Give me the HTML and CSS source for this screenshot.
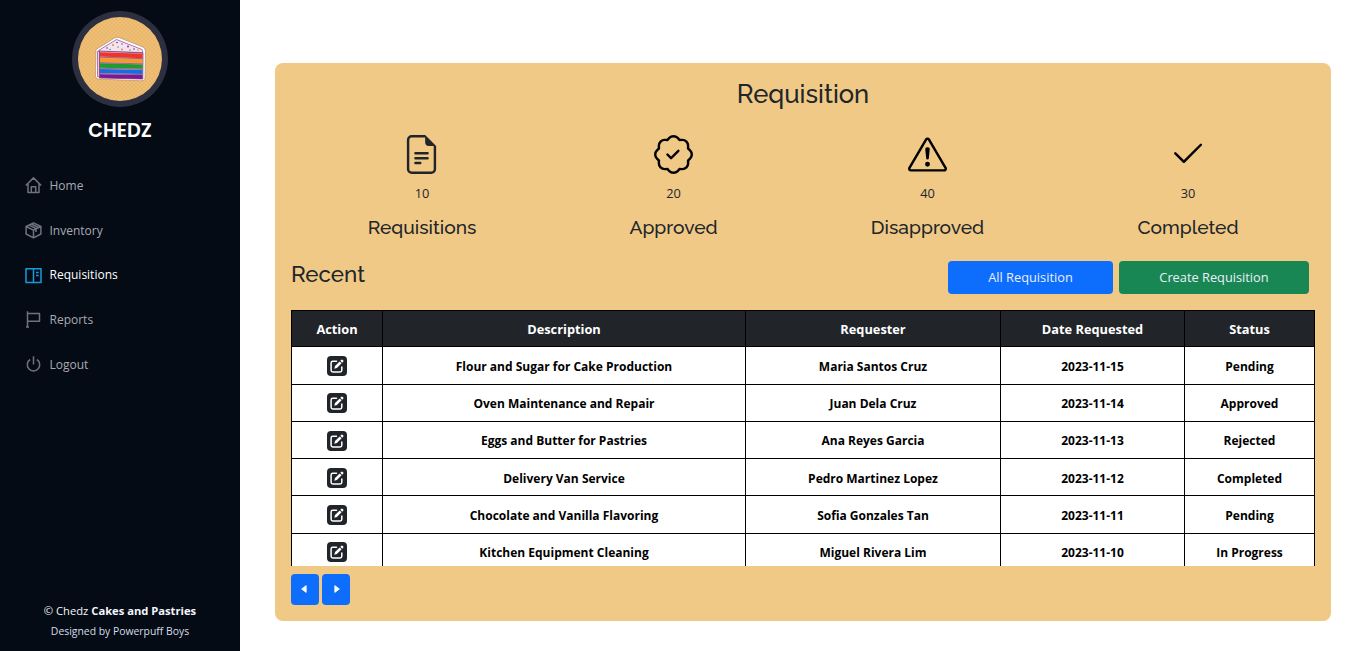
FILE: index.html
```
<!DOCTYPE html>
<html lang="en">
<head>
<meta charset="utf-8">
<title>Requisition</title>
<link rel="stylesheet" href="styles.css">
</head>
<body>
<svg class="defs" aria-hidden="true">
  <symbol id="edit" viewBox="0 0 14 14"><path d="M6.500 2.200H2.800Q1.100 2.200 1.100 3.900V11.200Q1.100 12.900 2.800 12.900H10.100Q11.800 12.900 11.800 11.200V8" fill="none" stroke="#fff" stroke-width="1.500" stroke-linecap="round"/><path d="M4.300 9.700L5 7.100 9.700 2.400 11.600 4.300 6.900 9z"/><path d="M10.300 1.800L11.400 .7Q11.900 .3 12.400 .7L13.300 1.600Q13.700 2.100 13.300 2.600L12.200 3.700z"/></symbol>
</svg>
<div class="app">
  <aside class="sidebar">
    <div class="brand">
      <svg class="logo" viewBox="0 0 96 96">
        <defs><pattern id="weave" width="4" height="4" patternUnits="userSpaceOnUse"><rect width="4" height="4" fill="#eebf75"/><path d="M0 0l4 4M4 0L0 4" stroke="#e5b36a" stroke-width=".7"/></pattern></defs>
        <circle cx="48" cy="48" r="48" fill="#2c2f3f"/>
        <circle cx="48" cy="48" r="42" fill="url(#weave)"/>
        <path d="M24 38.500L42.500 27Q45 25.800 47 26.500L71 36Q73.500 37.500 73.500 40L73 67.500Q72.500 70 69 69.800L26 68Q23.500 67.500 23.500 65Z" fill="#fff" stroke="#b98b68" stroke-width=".7"/>
        <path d="M26.500 39.500L44.500 28.500 70 38.500 71 41.500 28 40.500Z" fill="#f5e3f3" stroke="#6d2b66" stroke-width=".6"/>
        <path d="M25.500 40.500h2.500v26l-2.500-1z" fill="#e8c6dc" stroke="#7c3971" stroke-width=".6"/>
        <path d="M27.500 40L71 42 70.800 68 27.500 67Z" fill="#e7b5d0" stroke="#6d2b66" stroke-width=".7"/>
        <path d="M28 41.200l42.500 1.500v4.500L28 45.500z" fill="#f0332b"/>
        <path d="M28 47l42.500 1.300v4L28 51z" fill="#f59a25"/>
        <path d="M28 52.300l42.500 1.200v4.200L28 56.700z" fill="#1f9c30"/>
        <path d="M28 58l42.500 1v4L28 62z" fill="#1470df"/>
        <path d="M28 63.200l42.500 .9v4L28 66.800z" fill="#7c1799"/>
        <path d="M28 46.200l42.500 1.500M28 51.700l42.500 1.200M28 57.300l42.500 1M28 62.600l42.500 1" stroke="#6d2b66" stroke-width=".6"/>
        <g fill="#7a2f6c"><circle cx="45" cy="31.500" r=".8"/><circle cx="35" cy="37" r=".8"/><circle cx="56" cy="35.500" r=".9"/><circle cx="50" cy="33" r=".7"/><circle cx="62" cy="38" r=".8"/></g>
        <g fill="#d78a25"><circle cx="41" cy="34" r=".9"/><circle cx="50" cy="38.500" r=".9"/><circle cx="66" cy="39" r=".8"/></g>
        <g fill="#43a084"><circle cx="46" cy="36" r=".8"/><circle cx="38" cy="38.500" r=".8"/><circle cx="58" cy="39" r=".8"/></g>
      </svg>
      <div class="brand-name">CHEDZ</div>
    </div>
    <nav class="menu">
      <a class="menu-item"><svg class="menu-icon" viewBox="0 0 17 17"><path d="M.8 8.500L8.500 .9 16.200 8.500M3 6.800v8.700h11V6.800M6.300 15.500V9.800h4.400v5.700"/></svg>Home</a>
      <a class="menu-item"><svg class="menu-icon" viewBox="0 0 17 17"><path d="M8.500 .9L15.900 4.500V12L8.500 15.800 1.100 12V4.500ZM1.100 4.500L8.500 8.200 15.900 4.500M8.500 8.200v7.600M4 3.200L11 6.700V10M6.300 2L13.300 5.500"/></svg>Inventory</a>
      <a class="menu-item active"><svg class="menu-icon" viewBox="0 0 17 17"><path d="M1 1.800h15v13.700H1ZM8.500 1.800v13.700M11 5.500h2.700M11 8.500h2.700"/></svg>Requisitions</a>
      <a class="menu-item"><svg class="menu-icon" viewBox="0 0 17 17"><path d="M2.500 .3v16M1 16h3M2.500 2.500h12v7.700h-12"/></svg>Reports</a>
      <a class="menu-item"><svg class="menu-icon" viewBox="0 0 17 17"><path d="M8.500 .3v8.200M5.200 3.500A6.200 6.200 0 1 0 11.800 3.500"/></svg>Logout</a>
    </nav>
    <footer class="credits">
      <div class="copyright">© Chedz <b>Cakes and Pastries</b></div>
      <div class="designer">Designed by Powerpuff Boys</div>
    </footer>
  </aside>
  <main class="content">
    <section class="card">
      <h1 class="title">Requisition</h1>
      <div class="stats">
        <div class="stat stat-total">
          <svg class="stat-icon soft" viewBox="0 0 16 16"><path d="M5.500 7a.5.5 0 0 0 0 1h5a.5.5 0 0 0 0-1h-5zM5 9.500a.5.5 0 0 1 .5-.5h5a.5.5 0 0 1 0 1h-5a.5.5 0 0 1-.5-.5zm0 2a.5.5 0 0 1 .5-.5h2a.5.5 0 0 1 0 1h-2a.5.5 0 0 1-.5-.5z"/><path d="M9.500 0H4a2 2 0 0 0-2 2v12a2 2 0 0 0 2 2h8a2 2 0 0 0 2-2V4.500L9.500 0zm0 1v2A1.500 1.500 0 0 0 11 4.500h2V14a1 1 0 0 1-1 1H4a1 1 0 0 1-1-1V2a1 1 0 0 1 1-1h5.500z"/></svg>
          <div class="count">10</div><div class="label">Requisitions</div>
        </div>
        <div class="stat stat-approved">
          <svg class="stat-icon" viewBox="0 0 16 16"><path d="M10.354 6.146a.5.5 0 0 1 0 .708l-3 3a.5.5 0 0 1-.708 0l-1.500-1.500a.5.5 0 1 1 .708-.708L7 8.793l2.646-2.647a.5.5 0 0 1 .708 0z"/><path d="m10.273 2.513-.921-.944.715-.698.622.637.89-.011a2.890 2.890 0 0 1 2.924 2.924l-.01.89.636.622a2.890 2.890 0 0 1 0 4.134l-.637.622.011.89a2.890 2.890 0 0 1-2.924 2.924l-.89-.01-.622.636a2.890 2.890 0 0 1-4.134 0l-.622-.637-.89.011a2.890 2.890 0 0 1-2.924-2.924l.01-.89-.636-.622a2.890 2.890 0 0 1 0-4.134l.637-.622-.011-.89a2.890 2.890 0 0 1 2.924-2.924l.89.01.622-.636a2.890 2.890 0 0 1 4.134 0l-.715.698a1.890 1.890 0 0 0-2.704 0l-.92.944-1.320-.016a1.890 1.890 0 0 0-1.911 1.912l.016 1.318-.944.921a1.890 1.890 0 0 0 0 2.704l.944.92-.016 1.320a1.890 1.890 0 0 0 1.912 1.911l1.318-.016.921.944a1.890 1.890 0 0 0 2.704 0l.92-.944 1.320.016a1.890 1.890 0 0 0 1.911-1.912l-.016-1.318.944-.921a1.890 1.890 0 0 0 0-2.704l-.944-.92.016-1.320a1.890 1.890 0 0 0-1.912-1.911l-1.318.016z"/></svg>
          <div class="count">20</div><div class="label">Approved</div>
        </div>
        <div class="stat stat-disapproved">
          <svg class="stat-icon" viewBox="0 0 16 16"><path d="M7.938 2.016A.13.13 0 0 1 8.002 2a.13.13 0 0 1 .063.016.146.146 0 0 1 .054.057l6.857 11.667c.036.06.035.124.002.183a.163.163 0 0 1-.054.06.116.116 0 0 1-.066.017H1.146a.115.115 0 0 1-.066-.017.163.163 0 0 1-.054-.06.176.176 0 0 1 .002-.183L7.884 2.073a.147.147 0 0 1 .054-.057zm1.044-.45a1.130 1.130 0 0 0-1.960 0L.165 13.233c-.457.778.091 1.767.98 1.767h13.713c.889 0 1.438-.99.98-1.767L8.982 1.566z"/><path d="M7.002 12a1 1 0 1 1 2 0 1 1 0 0 1-2 0zM7.100 5.995a.905.905 0 1 1 1.800 0l-.35 3.507a.552.552 0 0 1-1.100 0L7.100 5.995z"/></svg>
          <div class="count">40</div><div class="label">Disapproved</div>
        </div>
        <div class="stat stat-completed">
          <svg class="stat-icon" viewBox="0 0 16 16"><path d="M13.854 3.646a.5.5 0 0 1 0 .708l-7 7a.5.5 0 0 1-.708 0l-3.500-3.500a.5.5 0 1 1 .708-.708L6.500 10.293l6.646-6.647a.5.5 0 0 1 .708 0z"/></svg>
          <div class="count">30</div><div class="label">Completed</div>
        </div>
      </div>
      <div class="toolbar">
        <h2 class="subtitle">Recent</h2>
        <div class="actions"><button class="btn all">All Requisition</button><button class="btn create">Create Requisition</button></div>
      </div>
      <div class="table-wrap">
        <table class="table">
          <colgroup><col class="c-action"><col class="c-desc"><col class="c-req"><col class="c-date"><col class="c-status"></colgroup>
          <thead><tr><th>Action</th><th>Description</th><th>Requester</th><th>Date Requested</th><th>Status</th></tr></thead>
          <tbody>
            <tr><td><span class="edit"><svg><use href="#edit"/></svg></span></td><td>Flour and Sugar for Cake Production</td><td>Maria Santos Cruz</td><td>2023-11-15</td><td>Pending</td></tr>
            <tr><td><span class="edit"><svg><use href="#edit"/></svg></span></td><td>Oven Maintenance and Repair</td><td>Juan Dela Cruz</td><td>2023-11-14</td><td>Approved</td></tr>
            <tr><td><span class="edit"><svg><use href="#edit"/></svg></span></td><td>Eggs and Butter for Pastries</td><td>Ana Reyes Garcia</td><td>2023-11-13</td><td>Rejected</td></tr>
            <tr><td><span class="edit"><svg><use href="#edit"/></svg></span></td><td>Delivery Van Service</td><td>Pedro Martinez Lopez</td><td>2023-11-12</td><td>Completed</td></tr>
            <tr><td><span class="edit"><svg><use href="#edit"/></svg></span></td><td>Chocolate and Vanilla Flavoring</td><td>Sofia Gonzales Tan</td><td>2023-11-11</td><td>Pending</td></tr>
            <tr><td><span class="edit"><svg><use href="#edit"/></svg></span></td><td>Kitchen Equipment Cleaning</td><td>Miguel Rivera Lim</td><td>2023-11-10</td><td>In Progress</td></tr>
          </tbody>
        </table>
      </div>
      <div class="pager">
        <button class="page-btn prev"><svg viewBox="0 0 6 8"><path d="M5.200 .6v6.800L.6 4z"/></svg></button>
        <button class="page-btn next"><svg viewBox="0 0 6 8"><path d="M.8 .6v6.800L5.400 4z"/></svg></button>
      </div>
    </section>
  </main>
</div>
</body>
</html>
```
FILE: styles.css
```
* { box-sizing: border-box; }
body { margin: 0; background: #fff; font: 13px/19.5px "Open Sans", sans-serif; color: #212529; overflow: hidden; }
.defs { display: none; }
.app { display: flex; height: 651px; }
.sidebar { width: 240px; flex: none; background: #040b14; display: flex; flex-direction: column; padding-top: 11px; }
.brand { display: flex; flex-direction: column; align-items: center; }
.logo { width: 96px; height: 96px; }
.brand-name { margin-top: 9px; font: 600 19.200px/30px Poppins, "Open Sans", sans-serif; color: #fff; }
.menu { display: flex; flex-direction: column; padding: 17.300px 0 0 25px; }
.menu-item { display: flex; align-items: center; gap: 7.500px; height: 44.700px; font-size: 12px; color: #a8a9b4; }
.menu-icon { width: 17px; height: 17px; fill: none; stroke: #6f7180; stroke-width: 1.500; stroke-linejoin: round; }
.menu-item.active { color: #fff; }
.active .menu-icon { stroke: #149ddd; }
.credits { margin-top: auto; padding-bottom: 10px; text-align: center; color: #f4f6fd; }
.copyright { font-size: 11.200px; line-height: 20px; }
.designer { font-size: 10.400px; line-height: 20px; color: #d5dce8; }
.content { flex: 1; padding: 63px 35px 30px; }
.card { height: 558px; padding: 16px; border-radius: 8px; background: #f0c987; display: flex; flex-direction: column; }
.title, .subtitle, .label { font-family: Raleway, Lato, sans-serif; font-weight: 500; }
.title { margin: 0; font-size: 25.600px; line-height: 31px; text-align: center; }
.stats { display: flex; justify-content: space-around; margin-top: 25px; }
.stat { display: flex; flex-direction: column; align-items: center; white-space: nowrap; }
.stat-total { width: 109px; }
.stat-approved { width: 88px; }
.stat-disapproved { width: 114px; }
.stat-completed { width: 101px; }
.stat-icon { width: 39px; height: 39px; fill: #000; }
.stat-icon.soft { fill: #212529; }
.stat-total .stat-icon, .stat-completed .stat-icon { margin-right: 1px; }
.count { margin-top: 10px; font-size: 12.800px; }
.label { margin-top: 12px; font-size: 19.200px; line-height: 23px; }
.toolbar { display: flex; justify-content: space-between; margin-top: 22px; padding-right: 6px; height: 49px; }
.subtitle { margin: 0; font-size: 22.400px; line-height: 27px; }
.actions { display: flex; gap: 6px; }
.btn { height: 33px; border: 0; border-radius: 4px; padding: 0; color: #e9f0fb; font: 12.800px "Open Sans", sans-serif; }
.all { width: 165px; background: #0d6efd; }
.create { width: 190px; background: #198754; }
.table-wrap { height: 256px; overflow: hidden; }
.table { width: 1024px; table-layout: fixed; border-collapse: collapse; background: #fff; color: #000; font-size: 12px; font-weight: 700; text-align: center; }
.c-action { width: 91px; }
.c-desc { width: 363px; }
.c-req { width: 255px; }
.c-date { width: 184px; }
.c-status { width: 130px; }
.table th, .table td { padding: 2px 0 0; border: 1px solid #000; vertical-align: middle; }
.table th { height: 36.950px; background: #212529; color: #fff; font-size: 12.800px; }
.table td { height: 37.250px; padding-top: 2.300px; }
.table td:first-child { padding-top: 1px; }
.edit { display: flex; align-items: center; justify-content: center; width: 20px; height: 20px; margin: 0 auto; border-radius: 4px; background: #212529; }
.edit svg { width: 14px; height: 14px; fill: #fff; }
.pager { display: flex; gap: 3px; margin-top: 8px; }
.page-btn { width: 28px; height: 31px; padding: 0; border: 0; border-radius: 4px; background: #0d6efd; display: flex; align-items: center; justify-content: center; }
.page-btn svg { width: 6px; height: 8px; fill: #fff; stroke: #fff; stroke-width: .8; stroke-linejoin: round; }
.prev { padding-right: 2px; }
.next { padding-left: 2px; }
```
